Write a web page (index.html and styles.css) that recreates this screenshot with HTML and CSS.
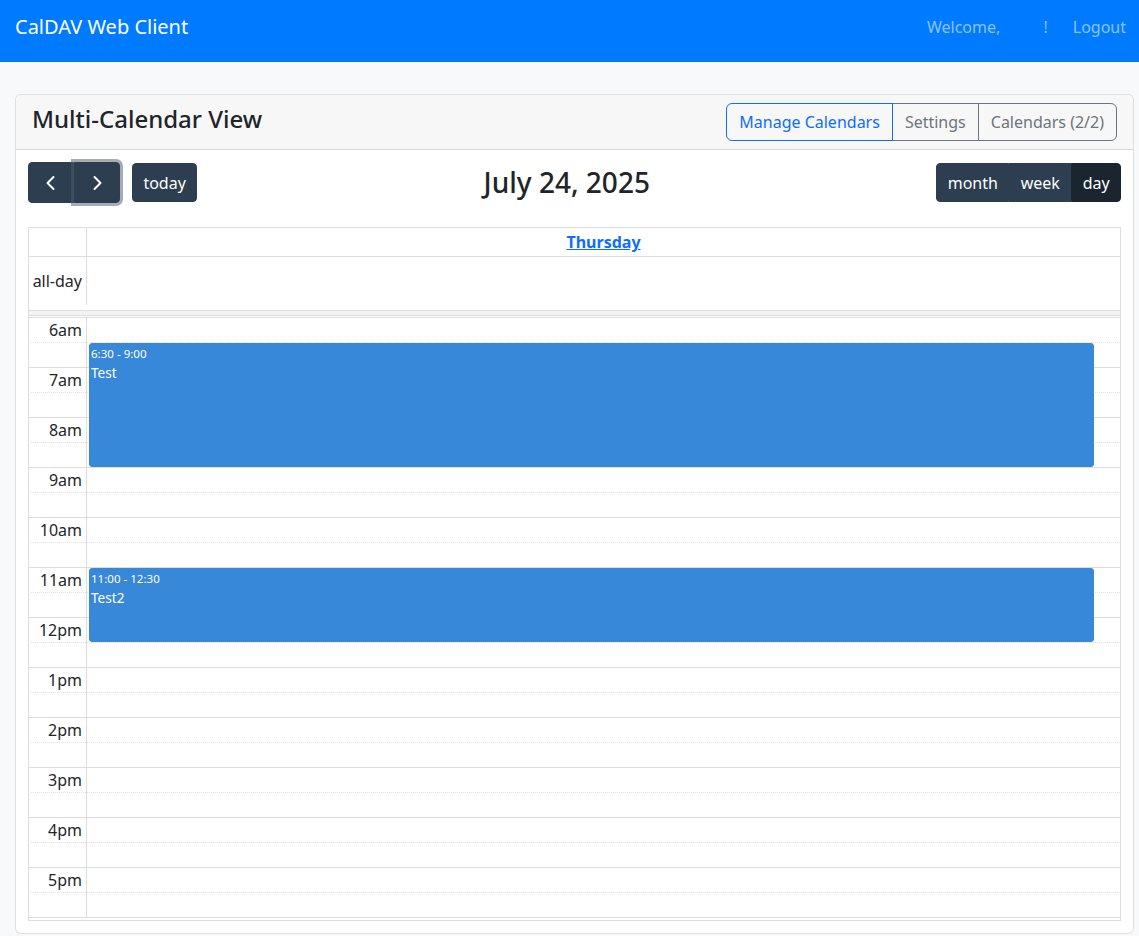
FILE: index.html
```html
<!DOCTYPE html>
<html lang="en">
<head>
<meta charset="utf-8">
<title>CalDAV Web Client</title>
<link rel="stylesheet" href="styles.css">
</head>
<body>
<nav class="navbar">
  <span class="brand">CalDAV Web Client</span>
  <div class="nav-right">
    <span class="welcome">Welcome, <span class="username"></span>!</span>
    <a class="logout" href="#">Logout</a>
  </div>
</nav>
<main class="page">
  <section class="card">
    <header class="card-header">
      <h4 class="card-title">Multi-Calendar View</h4>
      <div class="btn-group">
        <button class="btn btn-outline-primary">Manage Calendars</button>
        <button class="btn btn-outline-secondary">Settings</button>
        <button class="btn btn-outline-secondary">Calendars (2/2)</button>
      </div>
    </header>
    <div class="card-body">
      <div class="toolbar">
        <div class="chunk">
          <div class="fc-group">
            <button class="fc-btn fc-icon-btn" aria-label="prev">
              <svg width="24" height="24" viewBox="0 0 24 24"><path d="M14.5 6 L8.5 12 L14.5 18" fill="none" stroke="#fff" stroke-width="2" stroke-linecap="round" stroke-linejoin="round"/></svg>
            </button>
            <button class="fc-btn fc-icon-btn focused" aria-label="next">
              <svg width="24" height="24" viewBox="0 0 24 24"><path d="M9.5 6 L15.5 12 L9.5 18" fill="none" stroke="#fff" stroke-width="2" stroke-linecap="round" stroke-linejoin="round"/></svg>
            </button>
          </div>
          <button class="fc-btn">today</button>
        </div>
        <h2 class="fc-title">July 24, 2025</h2>
        <div class="fc-group">
          <button class="fc-btn">month</button>
          <button class="fc-btn">week</button>
          <button class="fc-btn active">day</button>
        </div>
      </div>

      <div class="grid">
        <div class="row head-row">
          <div class="axis"></div>
          <div class="lane head-cell"><a href="#" class="day-link">Thursday</a></div>
        </div>
        <div class="row allday-row">
          <div class="axis allday-axis">all-day</div>
          <div class="lane"></div>
        </div>
        <div class="divider"></div>
        <div class="slots">
          <div class="axis slot-axis">
            <div class="slot hour"><span>6am</span></div><div class="slot half"></div>
            <div class="slot hour"><span>7am</span></div><div class="slot half"></div>
            <div class="slot hour"><span>8am</span></div><div class="slot half"></div>
            <div class="slot hour"><span>9am</span></div><div class="slot half"></div>
            <div class="slot hour"><span>10am</span></div><div class="slot half"></div>
            <div class="slot hour"><span>11am</span></div><div class="slot half"></div>
            <div class="slot hour"><span>12pm</span></div><div class="slot half"></div>
            <div class="slot hour"><span>1pm</span></div><div class="slot half"></div>
            <div class="slot hour"><span>2pm</span></div><div class="slot half"></div>
            <div class="slot hour"><span>3pm</span></div><div class="slot half"></div>
            <div class="slot hour"><span>4pm</span></div><div class="slot half"></div>
            <div class="slot hour"><span>5pm</span></div><div class="slot half"></div>
          </div>
          <div class="day-col">
            <div class="slot hour"></div><div class="slot half"></div>
            <div class="slot hour"></div><div class="slot half"></div>
            <div class="slot hour"></div><div class="slot half"></div>
            <div class="slot hour"></div><div class="slot half"></div>
            <div class="slot hour"></div><div class="slot half"></div>
            <div class="slot hour"></div><div class="slot half"></div>
            <div class="slot hour"></div><div class="slot half"></div>
            <div class="slot hour"></div><div class="slot half"></div>
            <div class="slot hour"></div><div class="slot half"></div>
            <div class="slot hour"></div><div class="slot half"></div>
            <div class="slot hour"></div><div class="slot half"></div>
            <div class="slot hour"></div><div class="slot half"></div>
            <div class="event" style="top:26px;height:124px">
              <div class="event-time">6:30 - 9:00</div>
              <div class="event-title">Test</div>
            </div>
            <div class="event" style="top:251px;height:74px">
              <div class="event-time">11:00 - 12:30</div>
              <div class="event-title">Test2</div>
            </div>
          </div>
        </div>
      </div>
    </div>
  </section>
</main>
</body>
</html>
```

FILE: styles.css
```css
* { box-sizing: border-box; }

body {
  margin: 0;
  background: #f8f9fa;
  font-family: "Noto Sans", "DejaVu Sans", sans-serif;
  font-size: 16px;
  line-height: 1.5;
  color: #212529;
}

/* navbar */
.navbar {
  height: 62px;
  background: #007bff;
  display: flex;
  align-items: center;
  justify-content: space-between;
  padding: 0 13px 9px 15px;
}
.brand {
  color: #fff;
  font-size: 20px;
  line-height: 30px;
}
.nav-right {
  display: flex;
  align-items: center;
  gap: 25px;
  color: rgba(255, 255, 255, 0.55);
}
.welcome { white-space: pre; }
.username {
  display: inline-block;
  width: 39px;
}
.logout {
  color: rgba(255, 255, 255, 0.55);
  text-decoration: none;
}

/* page + card */
.page {
  padding: 32px 5px 0 15px;
}
.card {
  background: #fff;
  border: 1px solid rgba(0, 0, 0, 0.125);
  border-radius: 6px;
  overflow: hidden;
}
.card-header {
  display: flex;
  align-items: center;
  justify-content: space-between;
  padding: 8px 16px;
  background: #f7f7f7;
  border-bottom: 1px solid rgba(0, 0, 0, 0.125);
}
.card-title {
  margin: 0 0 5px;
  font-size: 24px;
  font-weight: 500;
  line-height: 1.2;
}
.btn-group {
  display: flex;
}
.btn {
  font-family: inherit;
  font-size: 16px;
  line-height: 24px;
  padding: 6px 12px;
  background: transparent;
  border: 1px solid #6c757d;
  color: #6c757d;
  margin-left: -1px;
}
.btn:first-child { border-radius: 6px 0 0 6px; margin-left: 0; }
.btn:last-child { border-radius: 0 6px 6px 0; }
.btn-outline-primary {
  color: #0d6efd;
  border-color: #0d6efd;
  position: relative;
  z-index: 1;
}

.card-body {
  padding: 12px;
}

/* toolbar */
.toolbar {
  display: flex;
  align-items: center;
  justify-content: space-between;
  margin-bottom: 24px;
}
.chunk {
  display: flex;
  align-items: center;
  gap: 12px;
}
.fc-group {
  display: flex;
}
.fc-btn {
  font-family: inherit;
  font-size: 16px;
  line-height: 24px;
  height: 39px;
  padding: 0 10.4px;
  background: #2c3e50;
  border: 1px solid #2c3e50;
  color: #fff;
  border-radius: 0;
  display: inline-flex;
  align-items: center;
  justify-content: center;
  position: relative;
}
.fc-group .fc-btn:first-child { border-top-left-radius: 4px; border-bottom-left-radius: 4px; }
.fc-group .fc-btn:last-child { border-top-right-radius: 4px; border-bottom-right-radius: 4px; }
.chunk > .fc-btn { border-radius: 4px; }
.fc-icon-btn {
  height: 41px;
  width: 46px;
  padding: 0;
}
.fc-btn.focused {
  z-index: 1;
  box-shadow: 0 0 0 3px rgba(76, 91, 106, 0.5);
}
.fc-btn.active {
  background: #1a252f;
  border-color: #1a252f;
}
.fc-title {
  margin: 0;
  font-size: 28px;
  font-weight: 500;
  line-height: 1.2;
}

/* grid */
.grid {
  border: 1px solid #ddd;
}
.row {
  display: flex;
  border-bottom: 1px solid #ddd;
}
.axis {
  width: 58px;
  flex: none;
  border-right: 1px solid #ddd;
}
.lane { flex: 1; }
.head-row { height: 29px; }
.head-cell {
  display: flex;
  align-items: center;
  justify-content: center;
  padding: 2px 4px;
}
.day-link {
  color: #0d6efd;
  font-weight: 700;
  text-decoration: underline;
  line-height: 24px;
}
.allday-row { height: 54px; }
.allday-axis {
  height: 48px;
  display: flex;
  align-items: center;
  justify-content: flex-end;
  padding-right: 4px;
}
.divider {
  height: 5px;
  background: #f3f3f3;
  border-bottom: 1px solid #ddd;
  margin-bottom: 1px;
}

.slots {
  display: flex;
  border-bottom: 1px solid #ddd;
  margin-bottom: 2px;
}
.slot {
  height: 25px;
  border-top: 1px solid #ddd;
}
.slot.half {
  border-top: 1px dotted #e2e2e2;
}
.slot-axis .slot {
  text-align: right;
  padding-right: 4px;
  line-height: 24px;
}
.slot-axis .slot.half { margin-left: 2px; }
.day-col {
  flex: 1;
  position: relative;
}
.event {
  position: absolute;
  left: 2px;
  right: 2.5%;
  background: #3788d8;
  border: 1px solid #3788d8;
  border-radius: 3px;
  color: #fff;
  padding: 1px 1px 0;
  overflow: hidden;
}
.event-time {
  font-size: 11.56px;
  line-height: 1.5;
  margin-bottom: 1px;
}
.event-title {
  font-size: 13.6px;
  line-height: 1.5;
}
```
